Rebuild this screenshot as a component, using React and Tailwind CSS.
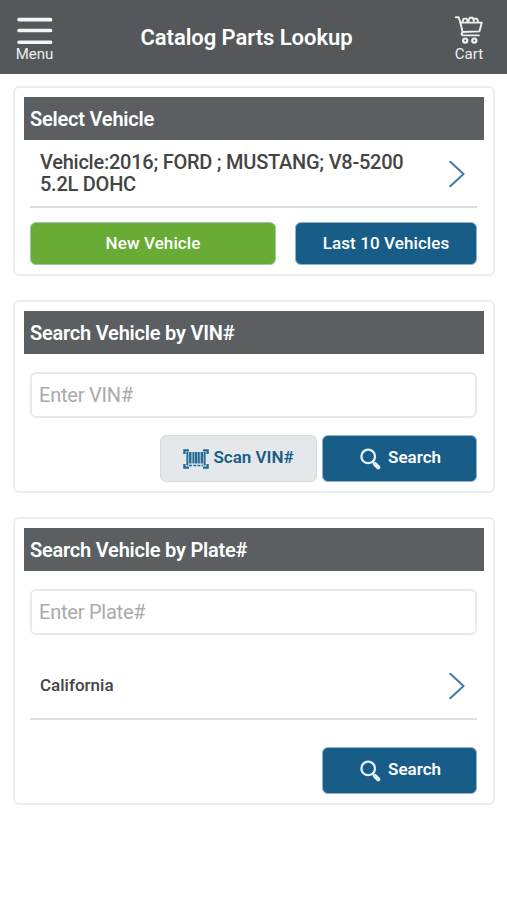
import { useState } from 'react';

const STROKE = { fill: 'none', stroke: 'currentColor', strokeLinecap: 'round', strokeLinejoin: 'round' };

function MenuIcon() {
  return (
    <svg width="36" height="28" viewBox="0 0 36 28" className="block">
      <g fill="#f4f5f5">
        <rect x="0.3" y="0.8" width="35" height="3.6" rx="1.5" />
        <rect x="0.3" y="11.7" width="35" height="3.6" rx="1.5" />
        <rect x="0.3" y="23.4" width="35" height="3.6" rx="1.5" />
      </g>
    </svg>
  );
}

function CartIcon() {
  return (
    <svg width="30" height="30" viewBox="0 0 30 30" className="block" {...STROKE}>
      <path d="M1.8 2.2H4.6L6.2 7L8.6 17L7.4 18.9L8.6 20.4H24.8" strokeWidth="1.9" />
      <path d="M6.4 7.6H27.8L25.4 16.4L8.6 17" strokeWidth="1.9" />
      <path d="M8.6 6.6L9.6 3.6H12.6L13.6 6.4M14.6 6L15.6 2.8H18.8L19.8 6M20.4 3.8H23L24.2 6.6" strokeWidth="1.9" />
      <circle cx="11.2" cy="25.6" r="2.1" strokeWidth="2.2" />
      <circle cx="20.3" cy="25.6" r="2.1" strokeWidth="2.2" />
    </svg>
  );
}

function Chevron() {
  return (
    <svg width="17" height="28" viewBox="0 0 17 28" className="block shrink-0 text-[#3f7ba8]" {...STROKE} strokeWidth="2">
      <path d="M2.2 1.8L15.6 14L2.2 26.2" />
    </svg>
  );
}

function SearchIcon() {
  return (
    <svg width="21" height="22" viewBox="0 0 21 22" className="block text-[#e4f0f8]" {...STROKE}>
      <circle cx="8.2" cy="8.4" r="6.8" strokeWidth="2.3" />
      <path d="M12.8 13.6L14.4 15.4" strokeWidth="2.2" />
      <path d="M15.2 16.2L18.2 19.2" strokeWidth="4.2" />
    </svg>
  );
}

function BarcodeIcon() {
  return (
    <svg width="26" height="20" viewBox="0 0 26 20" className="block" fill="none" stroke="#236a95">
      <path d="M1.4 5V1.4H6M20 1.4H24.6V5M24.6 15V18.6H20M6 18.6H1.4V15" strokeWidth="2.4" />
      <path d="M4.4 3V16.4M21.6 3V16.4M10.4 3V14.4M15.8 3V14.4" strokeWidth="2" />
      <path d="M7.3 3V14.4M13.1 3V14.4M18.8 3V14.4" strokeWidth="2.4" />
      <path d="M6 16.4H20" strokeWidth="1.5" strokeDasharray="3 1.2" />
    </svg>
  );
}

function Card({ title, className, children }) {
  return (
    <section className={`rounded-md border-2 border-[#ecedee] bg-white px-[9px] pt-[9px] ${className}`}>
      <h2 className="flex h-[43px] items-center bg-[#5b5f62] pl-1.5 pt-px text-[20px] font-semibold tracking-[-0.22px] text-white">{title}</h2>
      <div className="pl-1.5 pr-[7px]">{children}</div>
    </section>
  );
}

function Field({ placeholder, value, onChange, className }) {
  return (
    <input
      value={value}
      onChange={e => onChange(e.target.value)}
      placeholder={placeholder}
      className={`block h-[46px] w-full rounded-md border-2 border-[#e9eaea] bg-white px-[7px] pb-px text-[20px] tracking-[-0.23px] text-[#444] outline-none placeholder:text-[#aaaaaa] ${className}`}
    />
  );
}

function SearchButton() {
  return (
    <button className="flex h-[47px] w-[155px] items-center justify-center gap-[7px] rounded-md border border-[#8fb3cb] bg-[#175d88] pl-0.5 text-[17px] font-semibold text-white">
      <SearchIcon />
      <span className="pb-px">Search</span>
    </button>
  );
}

export default function App() {
  const [vin, setVin] = useState('');
  const [plate, setPlate] = useState('');

  return (
    <div className="min-h-screen bg-white font-[Roboto,'Liberation_Sans',sans-serif]">
      <header className="flex h-[74px] items-start justify-between bg-[#54585b] text-[#eef0f0]">
        <button className="flex w-[69px] flex-col items-center pt-[17px]">
          <MenuIcon />
          <span className="text-[15px] leading-[18px]">Menu</span>
        </button>
        <h1 className="self-center pr-[7px] text-[22px] font-semibold tracking-[-0.05px] text-white">Catalog Parts Lookup</h1>
        <button className="flex w-[76px] flex-col items-center pt-[15px]">
          <CartIcon />
          <span className="text-[15px] leading-[18px]">Cart</span>
        </button>
      </header>

      <main className="flex flex-col pl-[13px] pr-3 pt-3">
        <Card title="Select Vehicle" className="h-[190px]">
          <div className="flex h-[68px] items-start justify-between border-b-2 border-[#dcdddd] pl-2.5 pr-3 pt-[11px]">
            <p className="w-[380px] text-[20px] font-medium leading-[22px] tracking-[-0.25px] text-[#444444]">
              Vehicle:2016; FORD ; MUSTANG; V8-5200 5.2L DOHC
            </p>
            <div className="pt-[9px]"><Chevron /></div>
          </div>
          <div className="mt-3.5 flex justify-between">
            <button className="h-[43px] w-[246px] rounded-md border border-[#9dc5ac] bg-[#68ac36] text-[17px] font-medium tracking-[0.1px] text-white">New Vehicle</button>
            <button className="h-[43px] w-[182px] rounded-md border border-[#8fb3cb] bg-[#175d88] text-[17px] font-medium tracking-[0.1px] text-white">Last 10 Vehicles</button>
          </div>
        </Card>

        <Card title="Search Vehicle by VIN#" className="mt-6 h-[193px]">
          <Field placeholder="Enter VIN#" value={vin} onChange={setVin} className="mt-[18px]" />
          <div className="mt-[17px] flex justify-end gap-[5px]">
            <button className="flex h-[47px] w-[157px] items-center justify-center gap-1 rounded-md border border-[#d5dbe0] bg-[#e5e8eb] text-[17px] font-semibold text-[#175d88]">
              <BarcodeIcon />
              <span className="pb-px">Scan VIN#</span>
            </button>
            <SearchButton />
          </div>
        </Card>

        <Card title="Search Vehicle by Plate#" className="mt-6 h-[288px]">
          <Field placeholder="Enter Plate#" value={plate} onChange={setPlate} className="mt-[18px]" />
          <div className="mt-[17px] flex h-[68px] items-center justify-between border-b-2 border-[#dedfdf] pl-2.5 pr-3 pt-0.5">
            <span className="text-[17px] font-medium text-[#444444]">California</span>
            <Chevron />
          </div>
          <div className="mt-[27px] flex justify-end">
            <SearchButton />
          </div>
        </Card>
      </main>
    </div>
  );
}
